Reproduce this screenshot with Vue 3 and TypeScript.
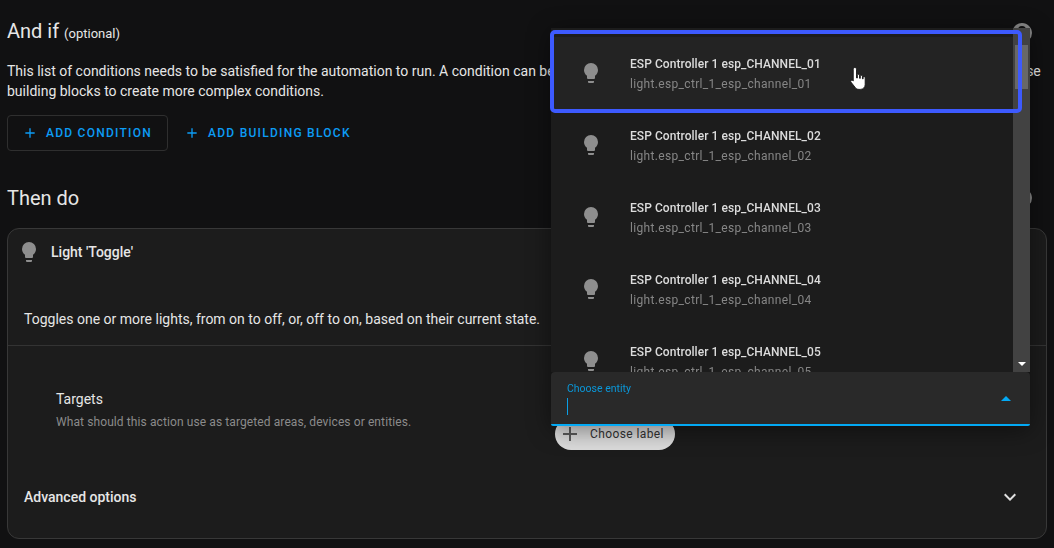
<script setup lang="ts">
const bulb = 'M12,2A7,7 0 0,0 5,9C5,11.38 6.19,13.47 8,14.74V17A1,1 0 0,0 9,18H15A1,1 0 0,0 16,17V14.74C17.81,13.47 19,11.38 19,9A7,7 0 0,0 12,2M9,21A1,1 0 0,0 10,22H14A1,1 0 0,0 15,21V20H9V21Z';
const help = 'M15.07,11.25L14.17,12.17C13.45,12.89 13,13.5 13,15H11V14.5C11,13.39 11.45,12.39 12.17,11.67L13.41,10.41C13.78,10.05 14,9.55 14,9C14,7.89 13.1,7 12,7A2,2 0 0,0 10,9H8A4,4 0 0,1 12,5A4,4 0 0,1 16,9C16,9.88 15.64,10.67 15.07,11.25M13,19H11V17H13M12,2A10,10 0 0,0 2,12A10,10 0 0,0 12,22A10,10 0 0,0 22,12C22,6.47 17.5,2 12,2Z';
const plus = 'M19,13H13V19H11V13H5V11H11V5H13V11H19V13Z';

const channels = ['01', '02', '03', '04', '05'];
</script>

<template>
  <div class="page">
    <section class="head-row first">
      <h2>And if <span class="optional">(optional)</span></h2>
      <svg class="help" viewBox="0 0 24 24"><path :d="help" /></svg>
    </section>
    <p class="intro">
      This list of conditions needs to be satisfied for the automation to run. A condition can be satisfied at a certain moment in time, for example, or by a device. You can use<br />
      building blocks to create more complex conditions.
    </p>
    <div class="actions">
      <button class="outlined">
        <svg viewBox="0 0 24 24"><path :d="plus" /></svg>
        ADD CONDITION
      </button>
      <button class="text-btn">
        <svg viewBox="0 0 24 24"><path :d="plus" /></svg>
        ADD BUILDING BLOCK
      </button>
    </div>

    <section class="head-row second">
      <h2>Then do</h2>
      <svg class="help" viewBox="0 0 24 24"><path :d="help" /></svg>
    </section>

    <div class="card">
      <div class="card-title">
        <svg class="bulb" viewBox="0 0 24 24"><path :d="bulb" /></svg>
        <span>Light 'Toggle'</span>
      </div>
      <p class="card-desc">Toggles one or more lights, from on to off, or, off to on, based on their current state.</p>
      <div class="targets">
        <div class="targets-text">
          <div class="targets-title">Targets</div>
          <div class="targets-sub">What should this action use as targeted areas, devices or entities.</div>
        </div>
        <div class="chip">
          <svg viewBox="0 0 24 24"><path :d="plus" /></svg>
          <span>Choose label</span>
        </div>
      </div>
      <div class="advanced">
        <span>Advanced options</span>
        <svg viewBox="0 0 24 24"><path d="M7.41,8.58L12,13.17L16.59,8.58L18,10L12,16L6,10L7.41,8.58Z" /></svg>
      </div>
    </div>

    <!-- open combo box sits over the card -->
    <div class="popup">
      <div class="list">
        <div v-for="(c, i) in channels" :key="c" class="item" :class="{ active: i === 0 }">
          <svg class="bulb" viewBox="0 0 24 24"><path :d="bulb" /></svg>
          <div class="item-text">
            <div class="item-name">ESP Controller 1 esp_CHANNEL_{{ c }}</div>
            <div class="item-id">light.esp_ctrl_1_esp_channel_{{ c }}</div>
          </div>
        </div>
        <div class="scrollbar">
          <div class="thumb"></div>
          <div class="arrow-down"></div>
        </div>
      </div>
      <div class="field">
        <div class="field-body">
          <div class="field-label">Choose entity</div>
          <div class="caret"></div>
        </div>
        <div class="arrow-up"></div>
      </div>
    </div>

    <div class="highlight"></div>

    <svg class="cursor" viewBox="0 0 18 24">
      <path d="M5.2 1.4c.9 0 1.5.7 1.5 1.6v8l.8.1V8.3c0-.8 1.9-.8 2 0v3l.7.1V9.2c0-.8 1.9-.8 2 0v2.600l.6.1v-1.400c0-.8 1.800-.8 1.900 0V17c0 2.700-1.800 4.600-4.600 4.600H9c-1.700 0-2.800-.7-3.700-2L1.500 14.800c-.7-1 .5-2.300 1.600-1.500l.6.500V3c0-.9.600-1.600 1.500-1.600z" fill="#fff" stroke="#111" stroke-width=".8" />
    </svg>
  </div>
</template>

<style scoped>
.page {
  position: relative;
  width: 1054px;
  height: 548px;
  overflow: hidden;
  box-sizing: border-box;
  padding: 0 7px;
  background: #111112;
  color: #e6e6e6;
  font-family: Roboto, "Liberation Sans", sans-serif;
}

h2 {
  margin: 0;
  font-size: 20px;
  font-weight: 400;
  line-height: 28px;
}

.optional {
  font-size: 13px;
}

.head-row {
  display: flex;
  align-items: center;
  justify-content: space-between;
  padding-right: 13px;
}

.head-row.first {
  padding-top: 17px;
}

.head-row.second {
  margin-top: 33px;
}

.help {
  width: 24px;
  height: 24px;
  fill: #8a8a8a;
}

.intro {
  margin: 13px 0 0;
  font-size: 14px;
  line-height: 20px;
  white-space: nowrap;
}

.actions {
  display: flex;
  align-items: center;
  gap: 1px;
  margin-top: 14px;
}

button {
  display: flex;
  align-items: center;
  height: 36px;
  box-sizing: border-box;
  padding: 0 14px;
  background: transparent;
  border: 1px solid transparent;
  border-radius: 4px;
  color: #0c9cf5;
  font-family: inherit;
  font-size: 12px;
  font-weight: 500;
  letter-spacing: 1.25px;
}

button svg {
  width: 16px;
  height: 16px;
  margin-right: 8px;
  fill: currentColor;
}

.outlined {
  padding-right: 15px;
  border-color: #2f2f2f;
}

.card {
  margin-top: 16px;
  height: 311px;
  box-sizing: border-box;
  background: #1c1c1c;
  border: 1px solid #383838;
  border-radius: 12px;
}

.card-title {
  display: flex;
  align-items: center;
  height: 46px;
  padding-left: 9px;
  font-size: 14px;
  font-weight: 500;
}

.bulb {
  width: 24px;
  height: 24px;
  fill: #8e8e8e;
  flex: none;
}

.card-title span {
  margin-left: 10px;
}

.card-desc {
  margin: 34px 0 0;
  padding: 0 16px 16px;
  font-size: 14px;
  line-height: 20px;
  border-bottom: 1px solid #333;
}

.targets {
  display: flex;
  height: 114px;
  padding-left: 48px;
}

.targets-text {
  width: 499px;
  padding-top: 44px;
}

.targets-title {
  font-size: 14px;
  line-height: 18px;
}

.targets-sub {
  margin-top: 5px;
  font-size: 12px;
  line-height: 18px;
  letter-spacing: 0.1px;
  color: #8b8b8b;
}

.chip {
  display: flex;
  align-items: center;
  align-self: flex-start;
  margin-top: 72px;
  height: 32px;
  width: 120px;
  box-sizing: border-box;
  padding-left: 3px;
  border-radius: 16px;
  background: #dcdcdc;
  color: #333;
  font-size: 12px;
  letter-spacing: 0.4px;
}

.chip svg {
  width: 24px;
  height: 24px;
  margin-right: 8px;
  fill: #5c5c5c;
}

.advanced {
  display: flex;
  align-items: center;
  justify-content: space-between;
  height: 48px;
  padding: 0 25px 0 16px;
  margin-top: 13px;
  font-size: 14px;
  font-weight: 500;
}

.advanced svg {
  width: 24px;
  height: 24px;
  margin-right: -1px;
  fill: #e0e0e0;
}

.popup {
  position: absolute;
  left: 551px;
  top: 28px;
  width: 479px;
  filter: drop-shadow(0 4px 12px rgba(0, 0, 0, 0.45));
}

.list {
  position: relative;
  height: 344px;
  padding-top: 9px;
  box-sizing: border-box;
  overflow: hidden;
  background: #1c1c1c;
}

.item {
  display: flex;
  align-items: center;
  height: 72px;
  padding-left: 28px;
}

.item.active {
  background: #232323;
}

.item-text {
  margin-left: 27px;
  padding-top: 1px;
}

.item-name {
  font-size: 12px;
  font-weight: 500;
  line-height: 20px;
  letter-spacing: 0.06px;
  color: #dcdcdc;
}

.item-id {
  font-size: 12px;
  line-height: 20px;
  letter-spacing: 0.33px;
  color: #868686;
}

.scrollbar {
  position: absolute;
  top: 0;
  right: 0;
  bottom: 0;
  width: 17px;
  background: #424242;
}

.thumb {
  position: absolute;
  top: 17px;
  left: 2px;
  width: 13px;
  height: 44px;
  background: #686868;
}

.arrow-down {
  position: absolute;
  left: 5px;
  bottom: 6px;
  border-left: 4px solid transparent;
  border-right: 4px solid transparent;
  border-top: 4px solid #fff;
}

.field {
  display: flex;
  align-items: center;
  justify-content: space-between;
  height: 54px;
  box-sizing: border-box;
  padding: 0 19px 0 16px;
  background: #292929;
  border-bottom: 2px solid #03a9f4;
  border-radius: 4px 4px 2px 2px;
}

.field-body {
  display: flex;
  flex-direction: column;
  align-self: flex-start;
  padding-top: 10px;
}

.field-label {
  font-size: 10.500px;
  line-height: 14px;
  color: #0a97d9;
}

.caret {
  width: 1px;
  height: 17px;
  margin-top: 2px;
  background: #0a9fe6;
}

.arrow-up {
  border-left: 5px solid transparent;
  border-right: 5px solid transparent;
  border-bottom: 5px solid #03a9f4;
}

.highlight {
  position: absolute;
  left: 550px;
  top: 30px;
  width: 472px;
  height: 83px;
  box-sizing: border-box;
  border: 4px solid #3d5afe;
  border-radius: 5px;
}

.cursor {
  position: absolute;
  left: 849px;
  top: 66px;
  width: 20px;
  height: 26px;
}
</style>

<style>
body {
  background: #111112;
}
</style>
